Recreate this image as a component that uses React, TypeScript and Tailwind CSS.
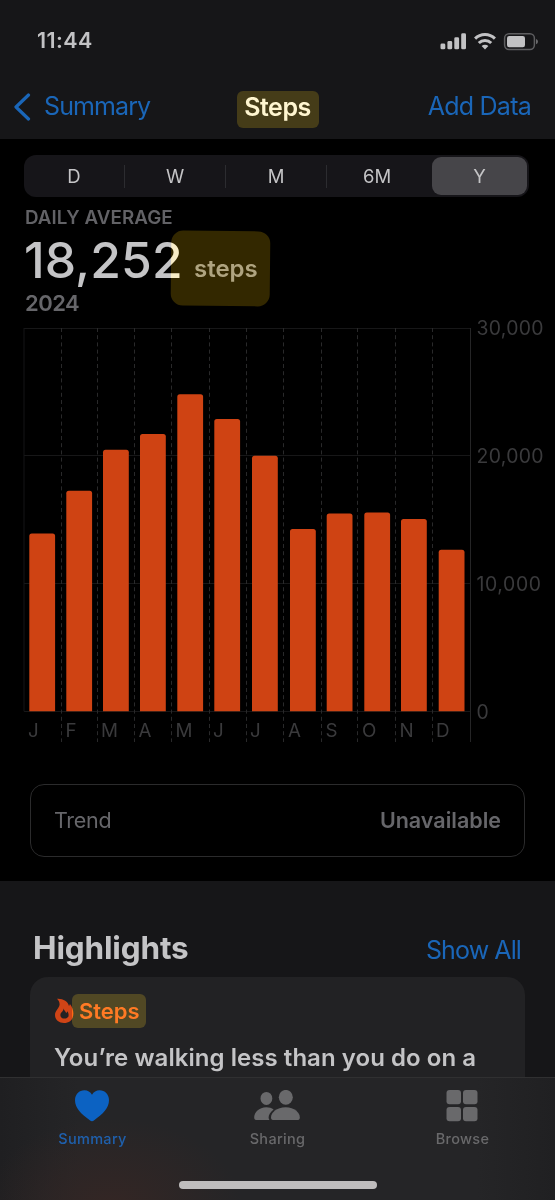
import { useState } from 'react';
import clsx from 'clsx';

type Range = 'D' | 'W' | 'M' | '6M' | 'Y';

interface MonthSteps {
    label: string;
    steps: number;
    gridX: number;
    barX: number;
    labelX: number;
}

const RANGES: Range[] = ['D', 'W', 'M', '6M', 'Y'];

const MONTHS: MonthSteps[] = [
    { label: 'J', steps: 13910, gridX: 24, barX: 29.3, labelX: 28 },
    { label: 'F', steps: 17260, gridX: 61.5, barX: 66.3, labelX: 65.5 },
    { label: 'M', steps: 20480, gridX: 97.5, barX: 103, labelX: 101 },
    { label: 'A', steps: 21700, gridX: 134.5, barX: 140, labelX: 138.5 },
    { label: 'M', steps: 24820, gridX: 171.5, barX: 177.3, labelX: 175.5 },
    { label: 'J', steps: 22870, gridX: 209.5, barX: 214.3, labelX: 213 },
    { label: 'J', steps: 20000, gridX: 246.5, barX: 252, labelX: 250 },
    { label: 'A', steps: 14260, gridX: 283.5, barX: 290, labelX: 288 },
    { label: 'S', steps: 15490, gridX: 321.5, barX: 326.7, labelX: 325.5 },
    { label: 'O', steps: 15560, gridX: 357.5, barX: 364.3, labelX: 362 },
    { label: 'N', steps: 15060, gridX: 395.5, barX: 401, labelX: 399.5 },
    { label: 'D', steps: 12640, gridX: 432.5, barX: 438.7, labelX: 436 },
];

const TICKS = [
    { value: 30000, label: '30,000', width: 67 },
    { value: 20000, label: '20,000', width: 67 },
    { value: 10000, label: '10,000', width: 64.5 },
    { value: 0, label: '0', width: 11.5 },
];

const PLOT_TOP = 18;
const PLOT_BOTTOM = 401.3;
const PLOT_LEFT = 24;
const PLOT_RIGHT = 470.5;
const MAX_STEPS = 30000;

const yFor = (steps: number) => PLOT_BOTTOM - (steps / MAX_STEPS) * (PLOT_BOTTOM - PLOT_TOP);

function StatusIcons() {
    return (
        <svg width="99" height="20" viewBox="0 0 99 20" className="text-[#c2c2c4]">
            {/* Signal */}
            <g fill="currentColor">
                <rect x="0.5" y="12.5" width="4.8" height="5.8" rx="1.4" />
                <rect x="7.4" y="10" width="4.8" height="8.3" rx="1.4" />
                <rect x="14.3" y="6.3" width="4.8" height="12" rx="1.4" />
                <rect x="21.2" y="2.3" width="4.8" height="16" rx="1.4" />
            </g>
            {/* Wifi */}
            <g fill="none" stroke="currentColor" strokeWidth="3">
                <path d="M35.1 7.6 A14 14 0 0 1 54.9 7.6" />
                <path d="M38.8 12 A8.8 8.8 0 0 1 51.2 12" />
            </g>
            <path d="M41.6 15 A4.9 4.9 0 0 1 48.4 15 L45 18.4 Z" fill="currentColor" />
            {/* Battery */}
            <rect x="64.6" y="2.8" width="29.8" height="15.6" rx="4.4" fill="none" stroke="#5e5e60" strokeWidth="1.5" />
            <rect x="67" y="5" width="18" height="11.2" rx="2.2" fill="currentColor" />
            <path d="M96 8 Q98 8.6 98 10.6 Q98 12.6 96 13.2 Z" fill="#6a6a6c" />
        </svg>
    );
}

function StepsChart() {
    return (
        <svg width="555" height="440" viewBox="0 0 555 440" className="-mt-2 block overflow-visible font-['Inter',sans-serif]">
            {TICKS.map(({ value }) => (
                <line
                    key={value}
                    x1={PLOT_LEFT}
                    x2={PLOT_RIGHT}
                    y1={Math.floor(yFor(value)) + 0.5}
                    y2={Math.floor(yFor(value)) + 0.5}
                    stroke="#171718"
                />
            ))}

            {MONTHS.map((m, i) => (
                <g key={i}>
                    {i === 0 ? (
                        <line x1="24" x2="24" y1={PLOT_TOP} y2={PLOT_BOTTOM} stroke="#151516" />
                    ) : (
                        <line x1={m.gridX} x2={m.gridX} y1={PLOT_TOP} y2="432" stroke="#29292a" strokeDasharray="4 3.2" />
                    )}
                    <path
                        d={`M${m.barX} ${PLOT_BOTTOM} V${yFor(m.steps) + 2.5} q0 -2.5 2.5 -2.5 h20.8 q2.5 0 2.5 2.5 V${PLOT_BOTTOM} Z`}
                        fill="#cf4313"
                    />
                    <text x={m.labelX} y="427.3" fontSize="18.8" fill="#3a3a3c">
                        {m.label}
                    </text>
                </g>
            ))}

            <line x1={PLOT_RIGHT} x2={PLOT_RIGHT} y1={PLOT_TOP} y2="432" stroke="#252526" />

            {TICKS.map(({ value, label, width }) => (
                <text key={value} x="476.5" y={yFor(value) + 7.2} fontSize="19.4" fill="#3a3a3c" textLength={width}>
                    {label}
                </text>
            ))}
        </svg>
    );
}

function FlameIcon() {
    return (
        <svg width="20" height="26" viewBox="0 0 20 26" className="shrink-0">
            <path
                d="M3 0.8 C9 0.4 14 3.4 15 8 C15.5 7.4 15.8 6.8 15.9 6 C18 8.6 19.4 12 19.4 15.6 C19.4 21.4 15.6 25 10 25 C4.6 25 1 21.6 1 17 C1 12.4 5.4 10.2 5.6 6.4 C5.6 4.2 4.6 2.2 3 0.8 Z"
                fill="#cf4416"
            />
            <path
                d="M9.6 10.6 C10 12.6 11.4 13.4 12.2 15 C12.9 14.6 13.2 14 13.3 13.3 C14.4 14.6 14.6 16 14.6 17.2 C14.6 19.4 12.6 20.6 10.4 20.6 C8 20.6 6.4 19.2 6.4 17 C6.4 14.4 9.4 13.8 9.6 10.6 Z"
                fill="#222224"
            />
        </svg>
    );
}

function HeartIcon() {
    return (
        <svg width="34" height="32" viewBox="0 0 34 32">
            <path
                d="M17 31.3 C16.3 31.3 15.6 30.8 14.8 30.2 C6 23.8 0 18 0 10.2 C0 4.4 4.2 0.3 9.4 0.3 C12.7 0.3 15.4 1.9 17 4.7 C18.6 1.9 21.3 0.3 24.6 0.3 C29.8 0.3 34 4.4 34 10.2 C34 18 28 23.8 19.2 30.2 C18.4 30.8 17.7 31.3 17 31.3 Z"
                fill="#0c62c2"
            />
        </svg>
    );
}

function PeopleIcon() {
    return (
        <svg width="46" height="32" viewBox="0 0 46 32" fill="#69696b">
            <ellipse cx="12.4" cy="8.4" rx="5.9" ry="6.5" />
            <path d="M15.4 30 H3 C1.3 30 0.2 29.2 0.2 27.4 C0.2 22.6 5 17.3 12.3 17.3 C15.2 17.3 17.7 18.1 19.6 19.5 C16.4 21.9 14.6 25 14.6 27.6 C14.6 28.6 14.9 29.4 15.4 30 Z" />
            <ellipse cx="31.8" cy="7.3" rx="7" ry="7.4" />
            <path d="M20.2 30 C18 30 17 29.2 17 27.4 C17 22.8 22.6 17.3 31.7 17.3 C40.6 17.3 45.8 22.8 45.8 27.4 C45.8 29.2 44.9 30 43 30 Z" />
        </svg>
    );
}

function BrowseIcon() {
    return (
        <svg width="32" height="32" viewBox="0 0 32 32" fill="#69696b">
            <rect x="0.5" y="0" width="14.5" height="14.3" rx="3" />
            <rect x="17" y="0" width="14.5" height="14.3" rx="3" />
            <rect x="0.5" y="17" width="14.5" height="14.3" rx="3" />
            <rect x="17" y="17" width="14.5" height="14.3" rx="3" />
        </svg>
    );
}

const TABS = [
    { name: 'Summary', icon: <HeartIcon /> },
    { name: 'Sharing', icon: <PeopleIcon /> },
    { name: 'Browse', icon: <BrowseIcon /> },
];

export default function App() {
    const [range, setRange] = useState<Range>('Y');
    const [tab, setTab] = useState('Summary');

    return (
        <div className="w-[555px] h-[1200px] overflow-hidden bg-black font-['Inter',sans-serif] flex flex-col whitespace-nowrap">
            {/* Header */}
            <header className="h-[139px] shrink-0 bg-[#161618]">
                <div className="h-[81px] flex items-center justify-between pl-[37px] pr-4">
                    <span className="text-[21.5px] font-semibold tracking-[0.4px] text-[#c2c2c4]">11:44</span>
                    <StatusIcons />
                </div>
                <nav className="h-[52px] grid grid-cols-3 items-center text-[25px] text-[#1a66b8]">
                    <button className="flex items-center pl-[13px] gap-[13px] tracking-[-0.9px]">
                        <svg width="18" height="28" viewBox="0 0 18 28" fill="none" stroke="currentColor" strokeWidth="3.2" strokeLinecap="round" strokeLinejoin="round">
                            <path d="M15.5 2 L3 14 L15.5 26" />
                        </svg>
                        <span>Summary</span>
                    </button>
                    <h1 className="justify-self-center w-[82px] h-[37px] mt-1 rounded-md bg-[#453c18] text-center leading-[33px] font-semibold tracking-[-0.5px] text-[#fff6d0]">
                        Steps
                    </h1>
                    <button className="justify-self-end pr-6 tracking-[-0.75px]">Add Data</button>
                </nav>
            </header>

            <main className="h-[742px] shrink-0 pt-4">
                {/* Range picker */}
                <div className="mx-6 h-[42px] w-[505px] grid grid-cols-5 rounded-xl bg-[#161519]">
                    {RANGES.map((r, i) => (
                        <button
                            key={r}
                            onClick={() => setRange(r)}
                            className="flex items-center text-[18.5px] text-[#c4c4c6]"
                        >
                            <span
                                className={clsx(
                                    'flex-1 h-[38px] leading-[38px] rounded-[9px]',
                                    range === r && 'bg-[#464549] ml-[4px] mr-[2px]'
                                )}
                            >
                                {r}
                            </span>
                            {i < 4 && <span className={clsx('w-px h-[23px]', i < 3 ? 'bg-[#2c2c30]' : 'bg-transparent')} />}
                        </button>
                    ))}
                </div>

                {/* Average */}
                <div className="pl-[25px] pt-[9px]">
                    <p className="h-6 leading-6 text-[18.8px] font-semibold tracking-[0.05px] text-[#626266]">DAILY AVERAGE</p>
                    <div className="relative flex h-[58px] leading-[60px]">
                        <span className="-ml-px text-[49.8px] font-medium tracking-[0.1px] text-[#c4c4c6]">18,252</span>
                        <span className="absolute left-[169px] top-[9px] text-[24px] font-semibold tracking-[0px] text-[#7c7c80]">steps</span>
                        <span className="absolute left-[146px] top-[1px] h-[75px] w-[99px] rounded-xl rotate-[0.6deg] bg-[#332800] mix-blend-plus-lighter" />
                    </div>
                    <p className="h-[30px] leading-[30px] text-[22px] font-semibold tracking-[-0.5px] text-[#66666a]">2024</p>
                </div>

                <StepsChart />

                {/* Trend */}
                <div className="mx-[30px] mt-[34px] flex h-[73px] items-center justify-between rounded-[14px] border-[1.5px] border-[#2b2b2c] px-[23px] text-[21.5px] text-[#66666a]">
                    <span className="tracking-[-0.3px]">Trend</span>
                    <span className="font-semibold">Unavailable</span>
                </div>
            </main>

            {/* Highlights */}
            <section className="h-[196px] shrink-0 overflow-hidden bg-[#161618] px-[30px]">
                <div className="flex h-24 items-center justify-between pl-[3px] pr-1 pt-[38px]">
                    <h2 className="text-[31.5px] font-bold tracking-[-0.15px] text-[#c4c4c6]">Highlights</h2>
                    <button className="pt-[6px] text-[25px] tracking-[-0.9px] text-[#1a66b8]">Show All</button>
                </div>
                <div className="h-[120px] rounded-[18px] bg-[#222224] pl-[24px] pt-[17px]">
                    <div className="relative flex h-[34px] items-center">
                        <FlameIcon />
                        <span className="absolute left-[18px] h-[34px] w-[74px] rounded-md bg-[#2f2600] mix-blend-plus-lighter" />
                        <span className="relative pl-[5px] text-[22px] font-semibold tracking-[0px] text-[#ff7a24]">Steps</span>
                    </div>
                    <p className="pt-3 text-[24px] leading-9 font-semibold tracking-[0.05px] text-[#c4c4c6]">
                        You’re walking less than you do on a
                    </p>
                </div>
            </section>

            {/* Tab bar */}
            <footer className="flex-1 border-t border-[#303031] bg-[#252527] bg-[radial-gradient(ellipse_130px_90px_at_112px_130px,#342624,transparent),linear-gradient(90deg,#1f1f21,transparent_14%,transparent_86%,#202022)]">
                <div className="-ml-px grid h-[103px] w-[555px] grid-cols-3">
                    {TABS.map(({ name, icon }) => (
                        <button
                            key={name}
                            onClick={() => setTab(name)}
                            className={clsx(
                                'flex flex-col items-center pt-3 text-[14.5px] font-medium tracking-[0.3px]',
                                tab === name ? 'text-[#1f60ad]' : 'text-[#69696b]'
                            )}
                        >
                            {icon}
                            <span className="mt-[5px] pl-[2px] leading-6">{name}</span>
                        </button>
                    ))}
                </div>
                <div className="mx-auto h-2 w-[198px] rounded-full bg-[#bfbdbd]" />
            </footer>
        </div>
    );
}
